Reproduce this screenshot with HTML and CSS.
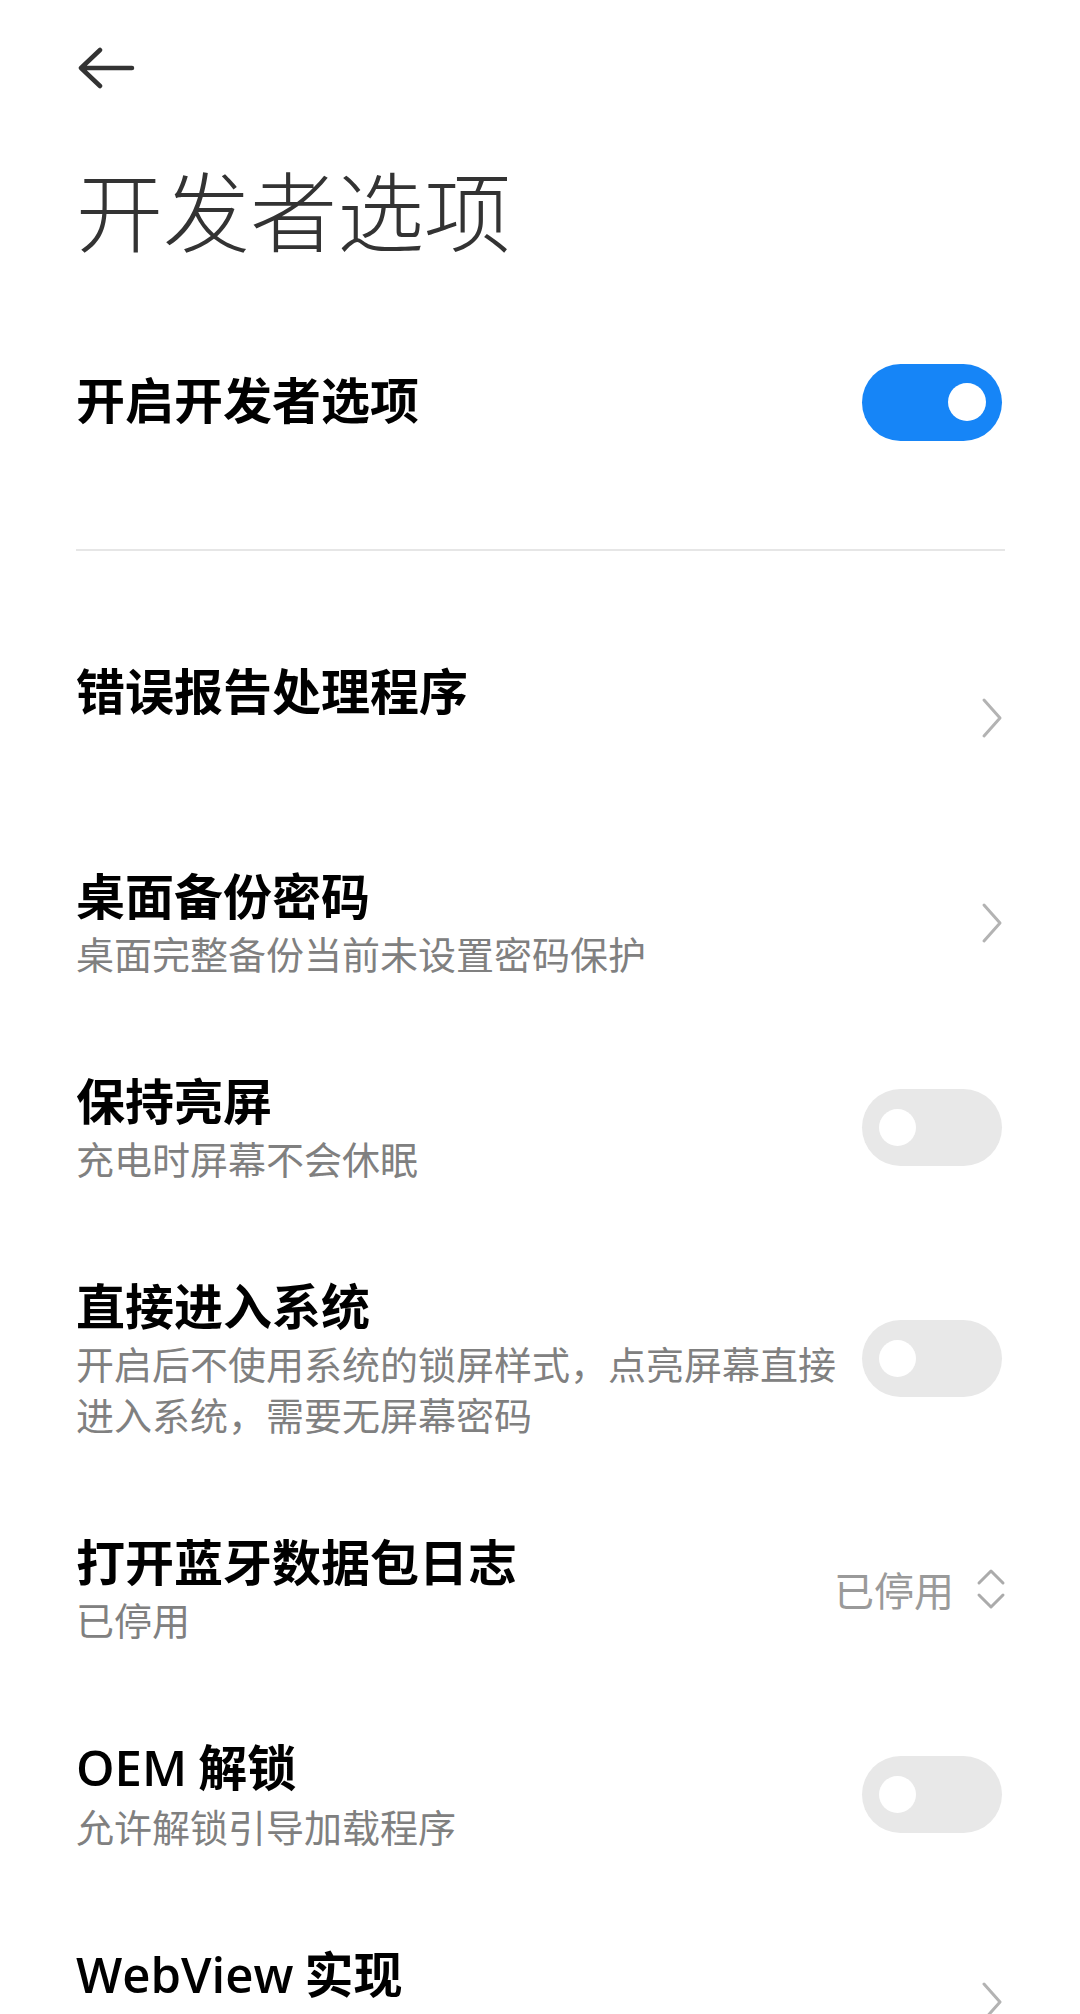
FILE: index.html
```html
<!DOCTYPE html>
<html lang="zh-CN">
<head>
<meta charset="utf-8">
<title>开发者选项</title>
<link rel="stylesheet" href="styles.css">
</head>
<body>
<div class="screen">
  <div class="topbar">
    <svg class="back" width="58" height="42" viewBox="0 0 58 42">
      <path d="M4 21 H55 M23 3 L4 21 L23 39" fill="none" stroke="#333" stroke-width="4.5" stroke-linecap="round" stroke-linejoin="round"/>
    </svg>
  </div>
  <h1 class="page-title">开发者选项</h1>

  <div class="master">
    <div class="master-label">开启开发者选项</div>
    <div class="switch on"><span class="knob"></span></div>
  </div>
  <div class="divider"></div>

  <div class="list">
    <div class="row">
      <div class="text">
        <div class="title">错误报告处理程序</div>
        <div class="sub empty"></div>
      </div>
      <svg class="chev" width="24" height="42" viewBox="0 0 24 42"><path d="M4 3 L20 21 L4 39" fill="none" stroke="#b3b3b3" stroke-width="3" stroke-linecap="round" stroke-linejoin="round"/></svg>
    </div>

    <div class="row">
      <div class="text">
        <div class="title">桌面备份密码</div>
        <div class="sub">桌面完整备份当前未设置密码保护</div>
      </div>
      <svg class="chev" width="24" height="42" viewBox="0 0 24 42"><path d="M4 3 L20 21 L4 39" fill="none" stroke="#b3b3b3" stroke-width="3" stroke-linecap="round" stroke-linejoin="round"/></svg>
    </div>

    <div class="row">
      <div class="text">
        <div class="title">保持亮屏</div>
        <div class="sub">充电时屏幕不会休眠</div>
      </div>
      <div class="switch"><span class="knob"></span></div>
    </div>

    <div class="row">
      <div class="text">
        <div class="title">直接进入系统</div>
        <div class="sub">开启后不使用系统的锁屏样式，点亮屏幕直接进入系统，需要无屏幕密码</div>
      </div>
      <div class="switch"><span class="knob"></span></div>
    </div>

    <div class="row">
      <div class="text">
        <div class="title">打开蓝牙数据包日志</div>
        <div class="sub">已停用</div>
      </div>
      <div class="value">
        <span class="value-text">已停用</span>
        <svg class="updown" width="30" height="46" viewBox="0 0 30 46"><path d="M3 17 L15 5 L27 17 M3 29 L15 41 L27 29" fill="none" stroke="#ababab" stroke-width="3" stroke-linecap="round" stroke-linejoin="round"/></svg>
      </div>
    </div>

    <div class="row">
      <div class="text">
        <div class="title"><span class="en">OEM</span> 解锁</div>
        <div class="sub">允许解锁引导加载程序</div>
      </div>
      <div class="switch"><span class="knob"></span></div>
    </div>

    <div class="row">
      <div class="text">
        <div class="title"><span class="en">WebView</span> 实现</div>
        <div class="sub empty"></div>
      </div>
      <svg class="chev" width="24" height="42" viewBox="0 0 24 42"><path d="M4 3 L20 21 L4 39" fill="none" stroke="#b3b3b3" stroke-width="3" stroke-linecap="round" stroke-linejoin="round"/></svg>
    </div>
  </div>
</div>
</body>
</html>
```
FILE: styles.css
```css
html, body {
  margin: 0;
  padding: 0;
  background: #ffffff;
}
body {
  font-family: "Noto Sans CJK SC", "Noto Sans", sans-serif;
  color: #000;
}
.screen {
  padding: 0 78px 0 76px;
  overflow: hidden;
  height: 2014px;
  box-sizing: border-box;
}
.topbar {
  height: 136px;
  display: flex;
  align-items: center;
}
.back {
  display: block;
  margin-left: 1px;
}
.page-title {
  margin: 12px 0 0 0;
  font-family: "Noto Sans CJK SC", sans-serif;
  font-size: 87px;
  line-height: 120px;
  font-weight: 300;
  color: #333333;
}
.master {
  height: 268px;
  display: flex;
  align-items: center;
  justify-content: space-between;
}
.master-label {
  font-size: 49px;
  line-height: 64px;
  font-weight: 700;
  color: #000;
  margin: -4px 0 4px;
}
.divider {
  margin-top: 13px;
  height: 2px;
  background: #e6e6e6;
  margin-right: -3px;
}
.list {
  margin-top: 64px;
}
.row {
  display: flex;
  align-items: center;
  justify-content: space-between;
  padding: 45px 0;
  gap: 24px;
}
.text {
  flex: 1;
  min-width: 0;
  max-width: 766px;
}
.title {
  font-size: 49px;
  line-height: 64px;
  font-weight: 700;
  color: #000;
  margin: -3px 0 3px;
}
.title .en {
  font-family: "Open Sans", "Noto Sans", sans-serif;
  font-weight: 600;
}
.sub {
  font-size: 38px;
  line-height: 51px;
  color: #808080;
  margin-top: -2px;
  margin-bottom: 2px;
}
.sub.empty {
  height: 51px;
}
.switch {
  flex: none;
  width: 140px;
  height: 77px;
  border-radius: 39px;
  background: #e8e8e8;
  position: relative;
}
.switch .knob {
  position: absolute;
  top: 20px;
  left: 17px;
  width: 37px;
  height: 37px;
  border-radius: 50%;
  background: #ffffff;
}
.switch.on {
  background: #1685f7;
}
.switch.on .knob {
  left: auto;
  right: 16px;
  top: 19px;
  width: 38px;
  height: 38px;
}
.chev {
  flex: none;
  display: block;
  margin-right: -2px;
}
.value {
  flex: none;
  display: flex;
  align-items: center;
  gap: 22px;
  margin-right: -4px;
}
.value-text {
  font-size: 40px;
  line-height: 52px;
  color: #9a9a9a;
}
.updown {
  display: block;
}
```
